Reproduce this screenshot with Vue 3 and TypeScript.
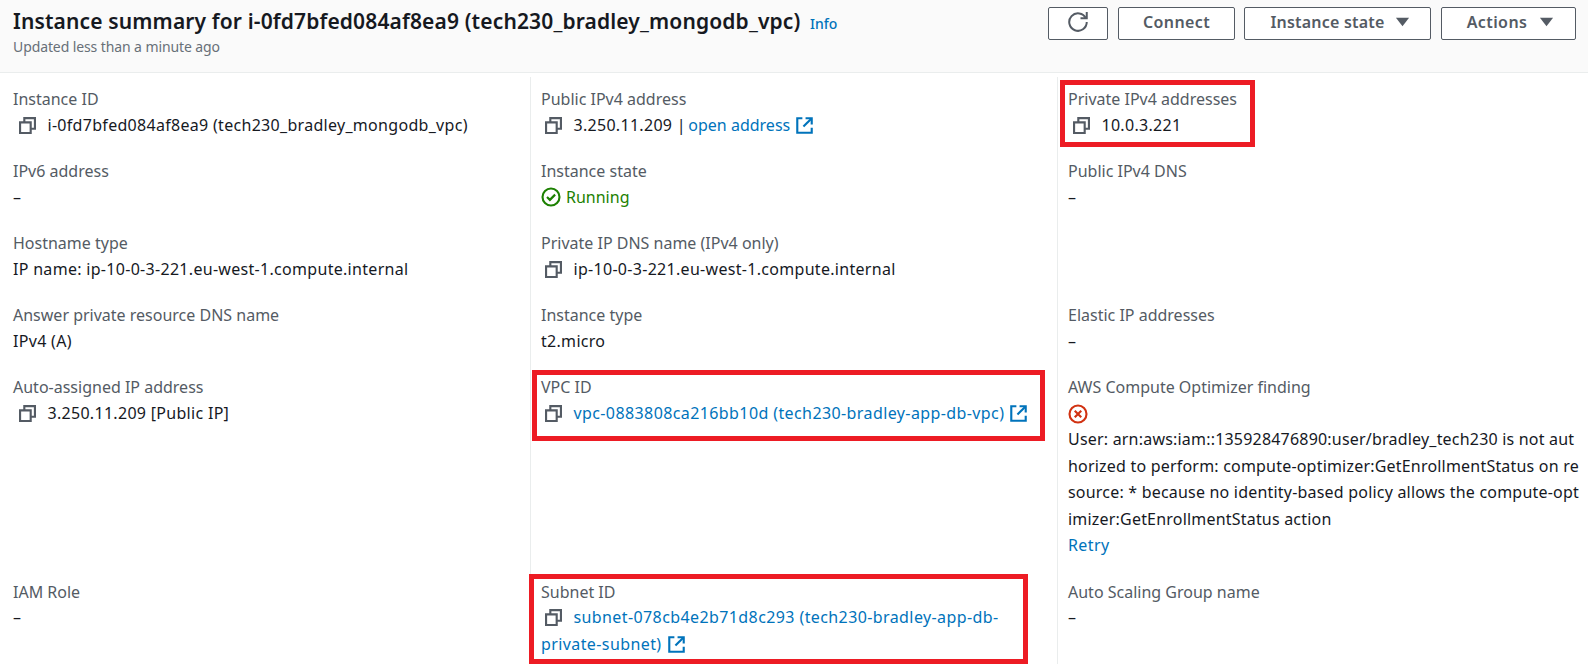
<script setup lang="ts">
interface Field {
  label?: string
  value?: string
  copy?: boolean
  link?: string
  tight?: boolean
  extra?: boolean
  status?: string
  error?: string
  mark?: string
}

const rows: Field[][] = [
  [
    { label: 'Instance ID', value: 'i-0fd7bfed084af8ea9 (tech230_bradley_mongodb_vpc)', copy: true },
    { label: 'Public IPv4 address', value: '3.250.11.209 | ', copy: true, link: 'open address', tight: true, extra: true },
    { label: 'Private IPv4 addresses', value: '10.0.3.221', copy: true, mark: 'mark-ip' }
  ],
  [
    { label: 'IPv6 address', value: '–' },
    { label: 'Instance state', status: 'Running' },
    { label: 'Public IPv4 DNS', value: '–' }
  ],
  [
    { label: 'Hostname type', value: 'IP name: ip-10-0-3-221.eu-west-1.compute.internal' },
    { label: 'Private IP DNS name (IPv4 only)', value: 'ip-10-0-3-221.eu-west-1.compute.internal', copy: true },
    {}
  ],
  [
    { label: 'Answer private resource DNS name', value: 'IPv4 (A)' },
    { label: 'Instance type', value: 't2.micro' },
    { label: 'Elastic IP addresses', value: '–' }
  ],
  [
    { label: 'Auto-assigned IP address', value: '3.250.11.209 [Public IP]', copy: true },
    { label: 'VPC ID', copy: true, link: 'vpc-0883808ca216bb10d (tech230-bradley-app-db-vpc)', extra: true, mark: 'mark-vpc' },
    {
      label: 'AWS Compute Optimizer finding',
      error:
        'User: arn:aws:iam::135928476890:user/bradley_tech230 is not authorized to perform: compute-optimizer:GetEnrollmentStatus on resource: * because no identity-based policy allows the compute-optimizer:GetEnrollmentStatus action'
    }
  ],
  [
    { label: 'IAM Role', value: '–' },
    { label: 'Subnet ID', copy: true, link: 'subnet-078cb4e2b71d8c293 (tech230-bradley-app-db-private-subnet)', extra: true, mark: 'mark-subnet' },
    { label: 'Auto Scaling Group name', value: '–' }
  ]
]
</script>

<template>
  <div class="page">
    <header class="head">
      <div>
        <h1 class="title">
          Instance summary for i-0fd7bfed084af8ea9 (tech230_bradley_mongodb_vpc)
          <a class="info">Info</a>
        </h1>
        <p class="updated">Updated less than a minute ago</p>
      </div>
      <div class="actions">
        <button class="btn btn-refresh" aria-label="Refresh">
          <svg viewBox="0 0 16 16" class="ico-refresh">
            <path d="M10 5h5V0" />
            <path d="M15 8a7 7 0 1 1-.7-3" />
          </svg>
        </button>
        <button class="btn btn-connect">Connect</button>
        <button class="btn btn-state">
          Instance state
          <svg viewBox="0 0 16 16" class="caret"><path d="M1 3h14l-7 9z" /></svg>
        </button>
        <button class="btn btn-actions">
          Actions
          <svg viewBox="0 0 16 16" class="caret"><path d="M1 3h14l-7 9z" /></svg>
        </button>
      </div>
    </header>

    <div class="grid">
      <template v-for="(row, r) in rows" :key="r">
        <div v-for="(f, c) in row" :key="c" class="field" :class="{ split: c > 0 }">
          <div class="inner">
            <div v-if="f.label" class="label">{{ f.label }}</div>
            <div v-if="f.status" class="value running">
              <svg viewBox="0 0 16 16" class="ico-status">
                <circle cx="8" cy="8" r="6.8" />
                <path d="m4.8 8 2.3 2.3 4.2-4.2" />
              </svg>
              {{ f.status }}
            </div>
            <template v-else-if="f.error">
              <div class="value">
                <svg viewBox="0 0 16 16" class="ico-error">
                  <circle cx="8" cy="8" r="6.8" />
                  <path d="m5.4 5.4 5.2 5.2M10.6 5.4l-5.2 5.2" />
                </svg>
              </div>
              <div class="value err-text">{{ f.error }}</div>
              <div class="value"><a class="link">Retry</a></div>
            </template>
            <div v-else-if="f.label" class="value">
              <svg v-if="f.copy" viewBox="0 0 16 16" class="ico-copy">
                <path d="M1 5h10v10H1z" />
                <path d="M5 5V1h10v10h-4" />
              </svg>
              {{ f.value }}<a v-if="f.link" class="link" :class="{ tight: f.tight }">{{ f.link }}</a>
              <svg v-if="f.extra" viewBox="0 0 16 16" class="ico-ext">
                <path d="M9 1.2h5.8V7" />
                <path d="M7 9l7.6-7.6" />
                <path d="M14.8 10v4.8H1.2V1.2H6" />
              </svg>
            </div>
            <div v-if="f.mark" class="mark" :class="f.mark"></div>
          </div>
        </div>
      </template>
    </div>
  </div>
</template>

<style>
html,
body {
  margin: 0;
  background: #fff;
}
</style>

<style scoped>
.page {
  width: 1588px;
  height: 664px;
  overflow: hidden;
  font-family: "Noto Sans", sans-serif;
  font-size: 16px;
  color: #16191f;
  background: #fff;
}

.head {
  box-sizing: border-box;
  height: 73px;
  display: flex;
  justify-content: space-between;
  padding: 7px 12px 0 13px;
  background: #fafafa;
  border-bottom: 1px solid #eaeded;
}

.title {
  margin: 0;
  font-size: 21px;
  line-height: 28px;
  font-weight: 600;
  letter-spacing: 0.14px;
}

.info {
  margin-left: 4px;
  font-size: 14px;
  font-weight: 500;
  color: #0073bb;
  letter-spacing: 0;
}

.updated {
  margin: -1px 0 0;
  font-size: 14px;
  line-height: 20px;
  letter-spacing: -0.1px;
  color: #687078;
}

.actions {
  display: flex;
  gap: 10px;
  align-items: flex-start;
}

.btn {
  box-sizing: border-box;
  height: 33px;
  display: flex;
  align-items: center;
  justify-content: center;
  gap: 12px;
  padding: 0 0 3px;
  border: 1px solid #545b64;
  border-radius: 2px;
  background: #fff;
  color: #545b64;
  font: 600 16px "Noto Sans", sans-serif;
  letter-spacing: 0.4px;
}

.btn-refresh { width: 60px; }
.btn-connect { width: 117px; margin-right: -1px; }
.btn-state { width: 187px; gap: 10px; padding-left: 5px; letter-spacing: 0.2px; }
.btn-actions { width: 135px; padding-left: 4px; }

.ico-refresh {
  width: 20px;
  height: 20px;
  fill: none;
  stroke: #545b64;
  stroke-width: 1.6;
}

.caret {
  width: 15px;
  height: 15px;
  fill: #545b64;
}

.grid {
  display: grid;
  grid-template-columns: 530px 527px 531px;
  margin-top: 4px;
}

.field {
  padding: 9px 12px 10px 13px;
}

.split {
  padding-left: 10px;
  border-left: 1px solid #eaeded;
}

.split:nth-child(3n) {
  padding-right: 6px;
}

.inner {
  position: relative;
}

.label {
  line-height: 26.5px;
  color: #545b64;
}

.value {
  margin: -1px 0 1px;
  line-height: 26.5px;
  letter-spacing: 0.3px;
}

.running {
  display: flex;
  align-items: center;
  gap: 5px;
  color: #1d8102;
  letter-spacing: 0;
}

.err-text {
  word-break: break-all;
  letter-spacing: 0.2px;
}

.link {
  color: #0073bb;
  letter-spacing: 0.4px;
}

.tight {
  margin-left: -2px;
  letter-spacing: 0;
}

.ico-copy {
  width: 17px;
  height: 17px;
  margin: 0 7px 0 6px;
  vertical-align: -3px;
  fill: none;
  stroke: #545b64;
  stroke-width: 2;
}

.split .ico-copy {
  margin-left: 4px;
}

.split:nth-child(3n) .ico-copy {
  margin-left: 5px;
}

.ico-ext {
  width: 17px;
  height: 17px;
  margin-left: 6px;
  vertical-align: -3px;
  fill: none;
  stroke: #0073bb;
  stroke-width: 2;
}

.ico-status {
  width: 20px;
  height: 20px;
  fill: none;
  stroke: #1d8102;
  stroke-width: 1.7;
}

.ico-error {
  width: 20px;
  height: 20px;
  vertical-align: -5px;
  fill: none;
  stroke: #d13212;
  stroke-width: 1.7;
}

/* red highlight boxes drawn over the screenshot */
.mark {
  position: absolute;
  box-sizing: border-box;
  border: 5px solid #ed1c24;
  pointer-events: none;
}

.mark-ip {
  left: -8px;
  top: -6px;
  width: 195px;
  height: 67px;
}

.mark-vpc {
  left: -9px;
  top: -4px;
  width: 513px;
  height: 71px;
}

.mark-subnet {
  left: -12px;
  top: -4.5px;
  width: 499px;
  height: 90px;
}
</style>
